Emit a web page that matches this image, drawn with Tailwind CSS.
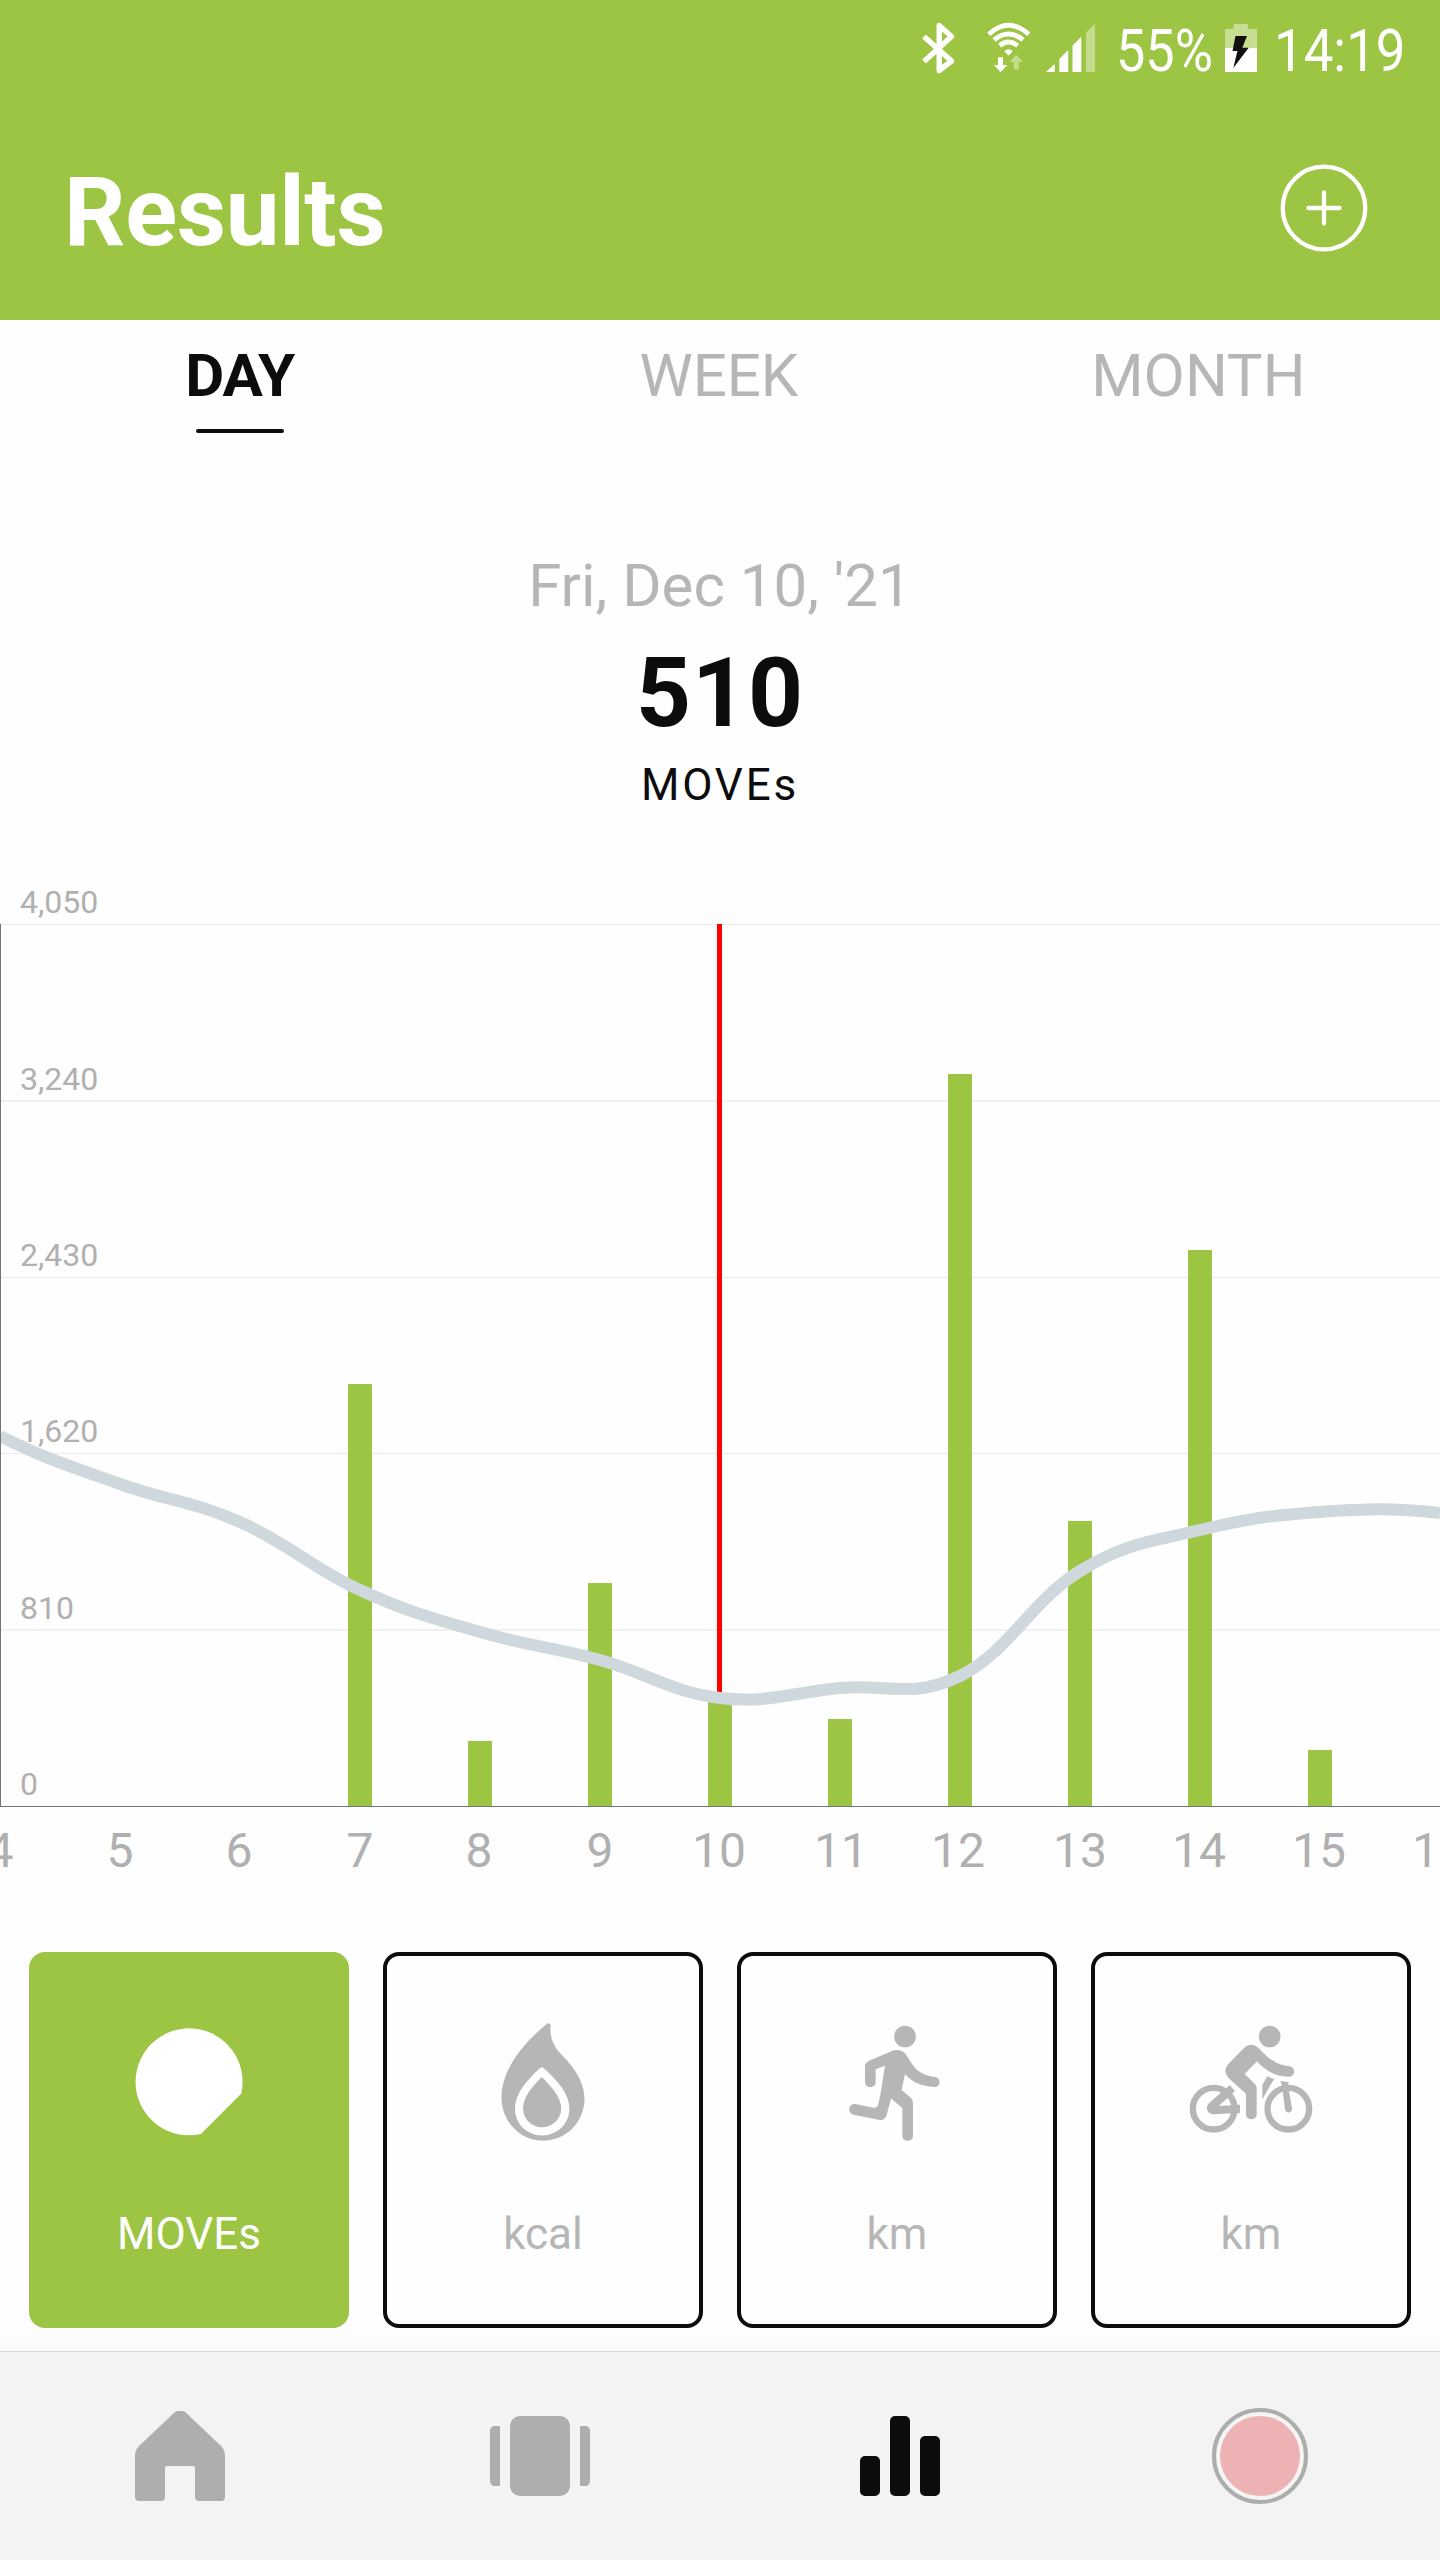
<!DOCTYPE html>
<html lang="en">
<head>
<meta charset="utf-8">
<title>Results</title>
<script src="https://cdn.jsdelivr.net/npm/@tailwindcss/browser@4"></script>
</head>
<body class="bg-white">
<div class="w-[1440px] h-[2560px] flex flex-col overflow-hidden bg-[#fefefe] font-['Roboto',sans-serif] text-[#0c0c0c]">

  <header class="h-[320px] shrink-0 bg-[#9dc544] text-white">
    <!-- Status bar -->
    <div class="h-24 flex items-start justify-end pr-[34px]">
      <svg class="mr-[27px] shrink-0" width="40" height="96" viewBox="919 0 40 96" fill="none" stroke="#fff" stroke-width="5.4" stroke-linejoin="round"><path d="M924 36.5 951.500 61 939.200 70.500V25.500L951.500 36.500 924 61.500"/></svg>
      <svg class="mr-[13px] shrink-0" width="46" height="96" viewBox="986 0 46 96" fill="none" stroke="#fff" stroke-width="4.800">
        <path d="M988.800 34.200Q1008.500 16.400 1028.700 34.200M994 39.800Q1008.500 28 1023 39.800M999.600 45.600Q1008.500 38.500 1017.600 45.600"/>
        <path d="M1004.300 51.200Q1008.500 47.300 1012.800 51.200L1008.500 55.500Z" fill="#fff" stroke="none"/>
        <path d="M998 57.300H1003V65H1007.200L1000.600 72.300 993.900 65H998Z" fill="#fff" stroke="none"/>
        <path d="M1013.700 69.500H1018.900V62H1023L1016.300 54.700 1009.500 62H1013.700Z" fill="#fff" fill-opacity=".4" stroke="none"/>
      </svg>
      <svg class="mr-[20px] shrink-0" width="51" height="96" viewBox="1045 0 51 96" fill="#fff"><path d="M1046 72 1054.700 64V72ZM1059.300 72V59L1068.200 50V72ZM1072.500 72V45.500L1081.300 36.800V72Z"/><path d="M1086 72V32.500L1095 23.800V72Z" fill-opacity=".4"/></svg>
      <div class="w-[109px] pt-4 text-[60px] leading-[70px] whitespace-nowrap"><span class="block w-[140px] origin-left scale-x-[0.87]">55%</span></div>
      <svg class="mr-[17px] shrink-0" width="32" height="96" viewBox="1225 0 32 96" fill="#fff"><path d="M1225 48V29H1233.500V24H1247.800V29H1257V48Z" fill-opacity=".42"/><path d="M1225 48H1257V72H1225Z"/><path fill="#111" d="M1235.500 36H1247L1242.300 47.700H1248.700L1233.300 68 1237.400 51H1232.500Z"/></svg>
      <div class="w-[132px] pt-4 text-[60px] leading-[70px] whitespace-nowrap"><span class="block w-[160px] origin-left scale-x-[0.88]">14:19</span></div>
    </div>
    <!-- Title row -->
    <div class="h-[224px] flex items-center justify-between pl-16 pr-[72px]">
      <h1 class="mt-2 text-[96px] leading-[112px] font-bold tracking-[-0.3px]">Results</h1>
      <svg width="88" height="88" viewBox="0 0 88 88" fill="none" stroke="#fff" stroke-width="4.300"><circle cx="44" cy="44" r="41.300"/><path stroke-linecap="round" d="M28.500 44H59.500M44 28.500V59.500"/></svg>
    </div>
  </header>

  <nav class="h-[231px] shrink-0 grid grid-cols-3 pt-[21px] pr-[2px] text-[60px] leading-[70px] text-center text-[#b6b6b6]">
    <div class="flex flex-col items-center text-[#0c0c0c] font-bold tracking-[-1px]">DAY<span class="mt-[18px] w-[88px] h-1 rounded-full bg-[#0c0c0c]"></span></div>
    <div>WEEK</div>
    <div>MONTH</div>
  </nav>

  <section class="h-[319px] shrink-0 flex flex-col items-center">
    <div class="text-[60px] leading-[70px] text-[#b6b6b6]">Fri, Dec 10, '21</div>
    <div class="mt-[16px] text-[96px] leading-[112px] font-bold tracking-[1px]">510</div>
    <div class="mt-[10px] text-[44px] leading-[52px] tracking-[2.8px]">MOVEs</div>
  </section>

  <svg class="shrink-0 block" width="1440" height="1082" viewBox="0 870 1440 1082">
    <g fill="#ebebeb">
      <rect y="924" width="1440" height="1"/><rect y="1100" width="1440" height="2" fill="#f1f1f1"/><rect y="1277" width="1440" height="1"/><rect y="1453" width="1440" height="1"/><rect y="1629" width="1440" height="2" fill="#f1f1f1"/>
    </g>
    <g fill="#b0b0b0" font-size="32">
      <text x="20" y="913">4,050</text><text x="20" y="1090">3,240</text><text x="20" y="1266">2,430</text><text x="20" y="1442">1,620</text><text x="20" y="1619">810</text><text x="20" y="1795">0</text>
    </g>
    <g fill="#9dc544">
      <rect x="348" y="1384" width="24" height="422"/><rect x="468" y="1741" width="24" height="65"/><rect x="588" y="1583" width="24" height="223"/><rect x="708" y="1695" width="24" height="111"/><rect x="828" y="1719" width="24" height="87"/><rect x="948" y="1074" width="24" height="732"/><rect x="1068" y="1521" width="24" height="285"/><rect x="1188" y="1250" width="24" height="556"/><rect x="1308" y="1750" width="24" height="56"/>
    </g>
    <rect x="717" y="924" width="5" height="772" fill="#f00"/>
    <path fill="none" stroke="#cfd8dc" stroke-width="12" d="M0 1436C48 1460 72 1466.800 120 1484C168 1501.200 192 1500.800 240 1522C288 1543.200 312 1568 360 1590C408 1612 432 1618 480 1632C528 1646 552 1646.800 600 1660C648 1673.200 672 1692.400 720 1698C768 1703.600 792 1692.400 840 1688C888 1683.600 912 1699.400 960 1676C1008 1652.600 1032 1600.200 1080 1571C1128 1541.800 1152 1541.800 1200 1530C1248 1518.200 1272 1515.400 1320 1512C1368 1508.600 1392 1508 1440 1513"/>
    <path fill="#747474" d="M0 924H1V1807H0ZM0 1806H1440V1807H0Z"/>
    <g fill="#b0b0b0" font-size="48" text-anchor="middle">
      <text x="0" y="1867">4</text><text x="120" y="1867">5</text><text x="239" y="1867">6</text><text x="360" y="1867">7</text><text x="479" y="1867">8</text><text x="600" y="1867">9</text><text x="719" y="1867">10</text><text x="841" y="1867">11</text><text x="958" y="1867">12</text><text x="1080" y="1867">13</text><text x="1199" y="1867">14</text><text x="1319" y="1867">15</text><text x="1439" y="1867">16</text>
    </g>
  </svg>

  <div class="h-[376px] shrink-0 flex gap-[34px] px-[29px] text-[44px] leading-[52px] text-[#b6b6b6]">
    <div class="w-80 shrink-0 rounded-2xl border-4 border-[#9dc544] bg-[#9dc544] text-white flex flex-col items-center pt-[59px] gap-[58px]">
      <svg class="shrink-0" width="120" height="135" viewBox="129 2015 120 135" fill="#fff"><path d="M201 2134A53.500 53.500 0 1 1 241.300 2093.500Z"/></svg>
      <span>MOVEs</span>
    </div>
    <div class="w-80 shrink-0 rounded-2xl border-4 border-[#0c0c0c] flex flex-col items-center pt-[59px] gap-[58px]">
      <svg class="shrink-0" width="120" height="135" viewBox="483 2015 120 135" fill="#b6b6b6">
        <path d="M547 2023.800Q550.500 2022 550.600 2026C549.500 2038 554 2047 561.500 2054.500C576 2069 584.500 2084 584.500 2098.500C584.500 2122 566 2140.700 542.800 2140.700C519.500 2140.700 501.500 2121 501.500 2097.500C501.500 2071 521 2045 547 2023.800Z"/>
        <path fill="#fefefe" d="M539.800 2068.200Q541.800 2066.300 543.800 2068.200C558 2081 569.400 2094 569.400 2108.500C569.400 2124 557 2135.400 542 2135.400C527 2135.400 515 2124 515 2108.500C515 2094 526 2081 539.800 2068.200Z"/>
        <path d="M541.800 2077C552 2087 561.200 2098 561.200 2108.500C561.200 2119 552.500 2127.300 542 2127.300C531.500 2127.300 523 2119 523 2108.500C523 2098 531.500 2087 541.800 2077Z"/>
      </svg>
      <span>kcal</span>
    </div>
    <div class="w-80 shrink-0 rounded-2xl border-4 border-[#0c0c0c] flex flex-col items-center pt-[59px] gap-[58px]">
      <svg class="shrink-0" width="120" height="135" viewBox="21 0 360 405" fill="#b6b6b6">
        <circle cx="225" cy="64.500" r="32.500"/>
        <path d="M191 106C206 103 220 107 227 117C235 129 244 146 255 158C269 174 289 183 313 185C335 187 333 217 313 216C275 214 245 201 225 177L215 225L241 247Q249 254 249 265V362C249 382 217 382 217 362V280L183 250L170 300Q165 316 150 315L70 299C51 294 55 263 76 267L130 278Q142 280 145 268C153 233 159 190 165 152L137 163V201C137 221 105 221 105 201V155Q105 143 116 138Z"/>
      </svg>
      <span>km</span>
    </div>
    <div class="w-80 shrink-0 rounded-2xl border-4 border-[#0c0c0c] flex flex-col items-center pt-[59px] gap-[58px]">
      <svg class="shrink-0" width="140" height="135" viewBox="1053 0 420 405" fill="#b6b6b6">
        <circle cx="1319" cy="64.500" r="32.500"/>
        <g fill="none" stroke="#b6b6b6" stroke-width="19"><circle cx="1151" cy="281" r="62.500"/><circle cx="1375" cy="281" r="62.500"/></g>
        <path d="M1199 211L1215 228L1208 235L1166 273L1230 269V294L1149 298C1131 297 1125 277 1137 265L1185 222Z"/>
        <path d="M1312 184L1332 192L1297 253V210ZM1351 198L1376 202L1374 211L1386 280C1388 295 1367 297 1365 283L1356 213Z"/>
        <path d="M1245 96Q1263 83 1282 96C1300 112 1323 145 1371 153C1397 150 1400 185 1376 185C1335 185 1303 165 1281 139L1244 177L1272 204Q1280 211 1280 221V298C1280 318 1248 318 1248 298V236L1198 191Q1176 168 1195 147Z"/>
      </svg>
      <span>km</span>
    </div>
  </div>

  <div class="h-[23px] shrink-0 bg-linear-to-b from-[#fefefe] to-[#f9f9f9]"></div>

  <nav class="h-[209px] shrink-0 bg-[#f3f3f3] border-t border-[#d9d9d9] grid grid-cols-4 justify-items-center items-center">
    <svg width="100" height="100" viewBox="130 2406 100 100" fill="#aeaeae"><path d="M175 2412Q176.500 2411 178 2411H182Q184 2411 185.500 2412.200L221.500 2446.500Q225 2450 225 2456V2497Q225 2501 221 2501H199.500Q195 2501 195 2497V2468Q195 2466 193 2466H167Q165 2466 165 2468V2497Q165 2501 161 2501H139.500Q135 2501 135 2497V2456Q135 2450 138.500 2446.500Z"/></svg>
    <svg width="100" height="100" viewBox="490 2406 100 100" fill="#aeaeae"><rect x="510" y="2416" width="60" height="80" rx="10"/><path d="M500 2426V2486H495Q490 2486 490 2481V2431Q490 2426 495 2426ZM580 2426V2486H585Q590 2486 590 2481V2431Q590 2426 585 2426Z"/></svg>
    <svg width="100" height="100" viewBox="850 2406 100 100" fill="#0c0c0c"><rect x="860" y="2456" width="20" height="40" rx="5"/><rect x="890" y="2416" width="20" height="80" rx="5"/><rect x="920" y="2436" width="20" height="60" rx="5"/></svg>
    <svg width="100" height="100" viewBox="1210 2406 100 100"><circle cx="1260" cy="2456" r="46" fill="#f6f4f4" stroke="#abaeac" stroke-width="4"/><circle cx="1260" cy="2456" r="40" fill="#edb3b4"/></svg>
  </nav>
</div>
</body>
</html>
